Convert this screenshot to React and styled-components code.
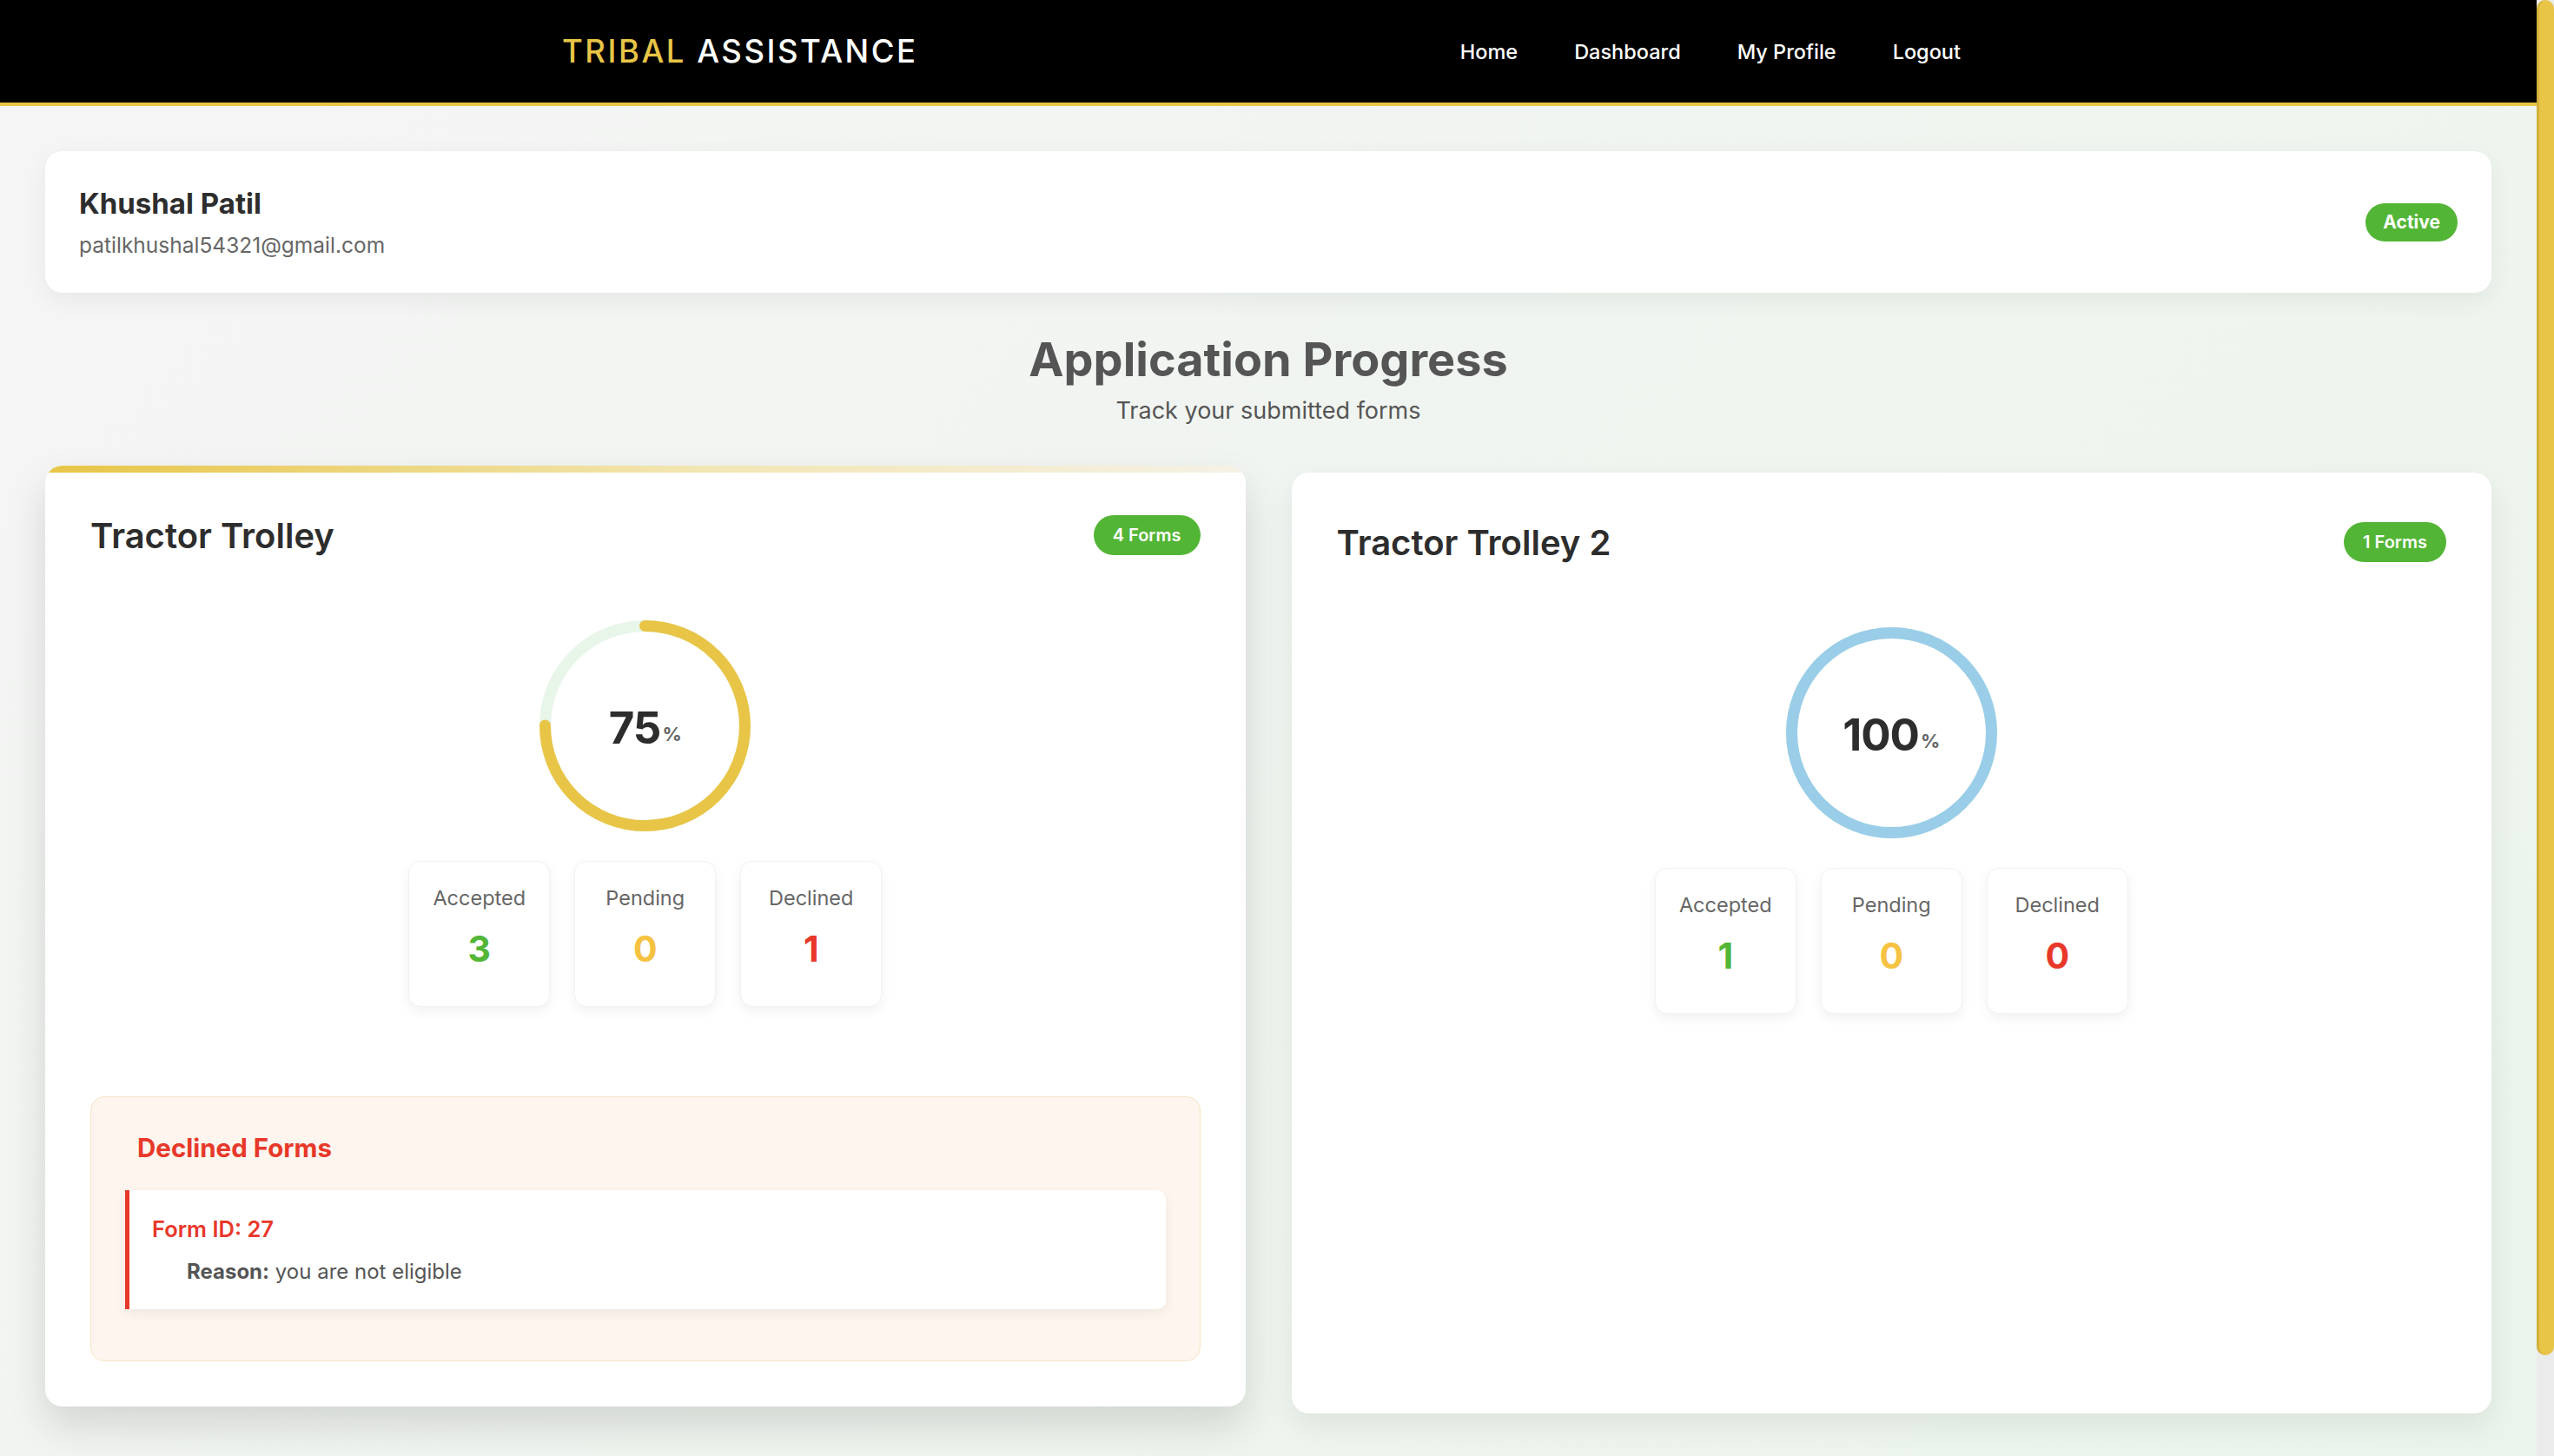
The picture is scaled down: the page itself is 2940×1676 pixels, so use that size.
import React from "react";
import styled, { createGlobalStyle } from "styled-components";

const GlobalStyle = createGlobalStyle`
  html, body { margin: 0; padding: 0; }
  body {
    font-family: Inter, "Open Sans", "Liberation Sans", sans-serif;
    background: #f5f5f5;
    color: #333;
  }
  * { box-sizing: border-box; }
`;

const Shell = styled.div`
  display: flex;
  align-items: flex-start;
`;

const Page = styled.div`
  flex: 1;
  min-width: 0;
`;

const ScrollRail = styled.aside`
  position: sticky;
  top: 0;
  flex: 0 0 20px;
  height: 100vh;
  background: #ebebeb;
  display: flex;
  flex-direction: column;
`;

const ScrollThumb = styled.div`
  height: 93.1%;
  background: #e8c547;
  border-left: 3px solid #d2b03c;
  border-radius: 10px;
`;

const NavBar = styled.header`
  background: #000;
  height: 122px;
  border-bottom: 4px solid #e8c547;
  display: flex;
  align-items: center;
`;

const NavInner = styled.div`
  width: 1626px;
  margin: 0 auto;
  display: flex;
  align-items: center;
  justify-content: space-between;
`;

const Logo = styled.div`
  font-size: 36.5px;
  font-weight: 500;
  letter-spacing: 2.5px;
  color: #fff;
  white-space: nowrap;
`;

const LogoAccent = styled.span`
  color: #e8c547;
`;

const NavLinks = styled.nav`
  display: flex;
  align-items: center;
  gap: 33px;
`;

const NavLink = styled.a`
  color: #fff;
  font-size: 23.5px;
  font-weight: 500;
  padding: 8px 16px;
  text-decoration: none;
  cursor: pointer;
`;

const Main = styled.main`
  min-height: 100vh;
  padding: 52px;
  background: linear-gradient(135deg, #f5f5f5 0%, #eaf4ea 100%);
`;

const ProfileCard = styled.section`
  background: #fff;
  border-radius: 20px;
  padding: 40px 39px;
  display: flex;
  align-items: center;
  justify-content: space-between;
  box-shadow: 0 8px 28px rgba(0, 0, 0, 0.06);
`;

const ProfileName = styled.h2`
  margin: 0;
  font-size: 33px;
  line-height: 41px;
  font-weight: 700;
  color: #2d2d2d;
`;

const ProfileEmail = styled.p`
  margin: 12px 0 0;
  font-size: 24.5px;
  line-height: 30px;
  color: #666;
`;

const Pill = styled.span`
  display: inline-flex;
  align-items: center;
  justify-content: center;
  background: #53b535;
  color: #fff;
  border-radius: 999px;
  font-weight: ${(p) => (p.$strong ? 700 : 600)};
  font-size: ${(p) => p.$size || 20}px;
  height: ${(p) => p.$h || 46}px;
  padding: 0 ${(p) => p.$pad || 22}px;
  white-space: nowrap;
`;

const Heading = styled.div`
  text-align: center;
  margin: 45px 0 56px;
`;

const Title = styled.h1`
  margin: 0;
  font-size: 54px;
  line-height: 64px;
  font-weight: 700;
  color: #555;
`;

const Subtitle = styled.p`
  margin: 11px 0 0;
  font-size: 27px;
  line-height: 31px;
  color: #555;
`;

const Grid = styled.div`
  display: grid;
  grid-template-columns: 1fr 1fr;
  gap: 53px;
  align-items: stretch;
`;

const Card = styled.article`
  position: relative;
  overflow: hidden;
  background: #fff;
  border-radius: 20px;
  padding: 57px 52px 52px;
  box-shadow: ${(p) =>
    p.$active
      ? "0 22px 46px rgba(0, 0, 0, 0.13)"
      : "0 14px 34px rgba(0, 0, 0, 0.07)"};
  transform: translateY(${(p) => (p.$active ? "-8px" : "0")});

  &::before {
    content: "";
    position: absolute;
    left: 0;
    right: 0;
    top: 0;
    height: 8px;
    background: linear-gradient(90deg, #e8c547 0%, #f2e6b3 55%, #f5f1e6 100%);
    display: ${(p) => (p.$active ? "block" : "none")};
  }
`;

const CardHeader = styled.div`
  display: flex;
  align-items: center;
  justify-content: space-between;
  height: 46px;
`;

const CardTitle = styled.h3`
  margin: 0;
  font-size: 40px;
  font-weight: 600;
  color: #2d2d2d;
`;

const RingWrap = styled.div`
  position: relative;
  width: 243px;
  height: 243px;
  margin: 75px auto 34px;
`;

const RingLabel = styled.div`
  position: absolute;
  inset: 0;
  display: flex;
  align-items: center;
  justify-content: center;
  padding-top: 4px;
`;

const RingValue = styled.span`
  font-size: 51px;
  font-weight: 700;
  color: #2d2d2d;
  letter-spacing: -1px;
`;

const RingPercent = styled.span`
  font-size: 22px;
  font-weight: 700;
  color: #666;
  margin-top: 14px;
  margin-left: 2px;
`;

const Stats = styled.div`
  display: flex;
  justify-content: center;
  gap: 28px;
`;

const StatBox = styled.div`
  width: 163px;
  height: 168px;
  background: #fff;
  border: 1px solid #f2f2f2;
  border-radius: 14px;
  box-shadow: 0 5px 14px rgba(0, 0, 0, 0.06);
  padding-top: 24px;
  text-align: center;
`;

const StatLabel = styled.div`
  font-size: 23.5px;
  line-height: 36px;
  color: #666;
`;

const StatNumber = styled.div`
  margin-top: 15px;
  font-size: 41px;
  line-height: 50px;
  font-weight: 700;
  color: ${(p) => p.$color};
`;

const Declined = styled.div`
  margin-top: 103px;
  background: #fdf5ee;
  border: 1px solid #f8e4c6;
  border-radius: 16px;
  padding: 41px 39px 59px;
`;

const DeclinedTitle = styled.h4`
  margin: 0 0 32px;
  padding-left: 14px;
  font-size: 29.5px;
  line-height: 34px;
  font-weight: 700;
  color: #e8382a;
`;

const DeclinedItem = styled.div`
  background: #fff;
  border-left: 5px solid #e8382a;
  border-radius: 0 10px 10px 0;
  box-shadow: 0 5px 14px rgba(0, 0, 0, 0.06);
  padding: 30px 26px 26px;
`;

const FormId = styled.div`
  font-size: 25.5px;
  line-height: 30px;
  font-weight: 600;
  color: #e8382a;
`;

const Reason = styled.p`
  margin: 17px 0 0 40px;
  font-size: 24px;
  line-height: 34px;
  color: #555;
`;

function Ring({ percent, color, track }) {
  const size = 243;
  const stroke = 13;
  const r = (size - stroke) / 2;
  const c = 2 * Math.PI * r;
  return (
    <RingWrap>
      <svg width={size} height={size} viewBox={`0 0 ${size} ${size}`}>
        <circle cx={size / 2} cy={size / 2} r={r} fill="none" stroke={track} strokeWidth={stroke} />
        <circle
          cx={size / 2}
          cy={size / 2}
          r={r}
          fill="none"
          stroke={color}
          strokeWidth={stroke}
          strokeLinecap="round"
          strokeDasharray={c}
          strokeDashoffset={c * (1 - percent / 100)}
          transform={`rotate(-90 ${size / 2} ${size / 2})`}
        />
      </svg>
      <RingLabel>
        <RingValue>{percent}</RingValue>
        <RingPercent>%</RingPercent>
      </RingLabel>
    </RingWrap>
  );
}

const schemes = [
  {
    name: "Tractor Trolley",
    forms: 4,
    percent: 75,
    color: "#e8c547",
    accepted: 3,
    pending: 0,
    declined: 1,
    active: true,
    declinedForms: [{ id: 27, reason: "you are not eligible" }],
  },
  {
    name: "Tractor Trolley 2",
    forms: 1,
    percent: 100,
    color: "#9acde8",
    accepted: 1,
    pending: 0,
    declined: 0,
    active: false,
    declinedForms: [],
  },
];

export default function App() {
  return (
    <Shell>
      <GlobalStyle />
      <Page>
        <NavBar>
          <NavInner>
            <Logo>
              <LogoAccent>TRIBAL</LogoAccent> ASSISTANCE
            </Logo>
            <NavLinks>
              <NavLink>Home</NavLink>
              <NavLink>Dashboard</NavLink>
              <NavLink>My Profile</NavLink>
              <NavLink>Logout</NavLink>
            </NavLinks>
          </NavInner>
        </NavBar>
        <Main>
          <ProfileCard>
            <div>
              <ProfileName>Khushal Patil</ProfileName>
              <ProfileEmail>patilkhushal54321@gmail.com</ProfileEmail>
            </div>
            <Pill $strong $size={21} $pad={20} $h={44}>Active</Pill>
          </ProfileCard>
          <Heading>
            <Title>Application Progress</Title>
            <Subtitle>Track your submitted forms</Subtitle>
          </Heading>
          <Grid>
            {schemes.map((s) => (
              <Card key={s.name} $active={s.active}>
                <CardHeader>
                  <CardTitle>{s.name}</CardTitle>
                  <Pill>{s.forms} Forms</Pill>
                </CardHeader>
                <Ring percent={s.percent} color={s.color} track="#e8f5e9" />
                <Stats>
                  <StatBox>
                    <StatLabel>Accepted</StatLabel>
                    <StatNumber $color="#52b636">{s.accepted}</StatNumber>
                  </StatBox>
                  <StatBox>
                    <StatLabel>Pending</StatLabel>
                    <StatNumber $color="#f5c242">{s.pending}</StatNumber>
                  </StatBox>
                  <StatBox>
                    <StatLabel>Declined</StatLabel>
                    <StatNumber $color="#e8382a">{s.declined}</StatNumber>
                  </StatBox>
                </Stats>
                {s.declinedForms.length > 0 && (
                  <Declined>
                    <DeclinedTitle>Declined Forms</DeclinedTitle>
                    {s.declinedForms.map((f) => (
                      <DeclinedItem key={f.id}>
                        <FormId>Form ID: {f.id}</FormId>
                        <Reason>
                          <strong>Reason:</strong> {f.reason}
                        </Reason>
                      </DeclinedItem>
                    ))}
                  </Declined>
                )}
              </Card>
            ))}
          </Grid>
        </Main>
      </Page>
      <ScrollRail aria-hidden="true">
        <ScrollThumb />
      </ScrollRail>
    </Shell>
  );
}
